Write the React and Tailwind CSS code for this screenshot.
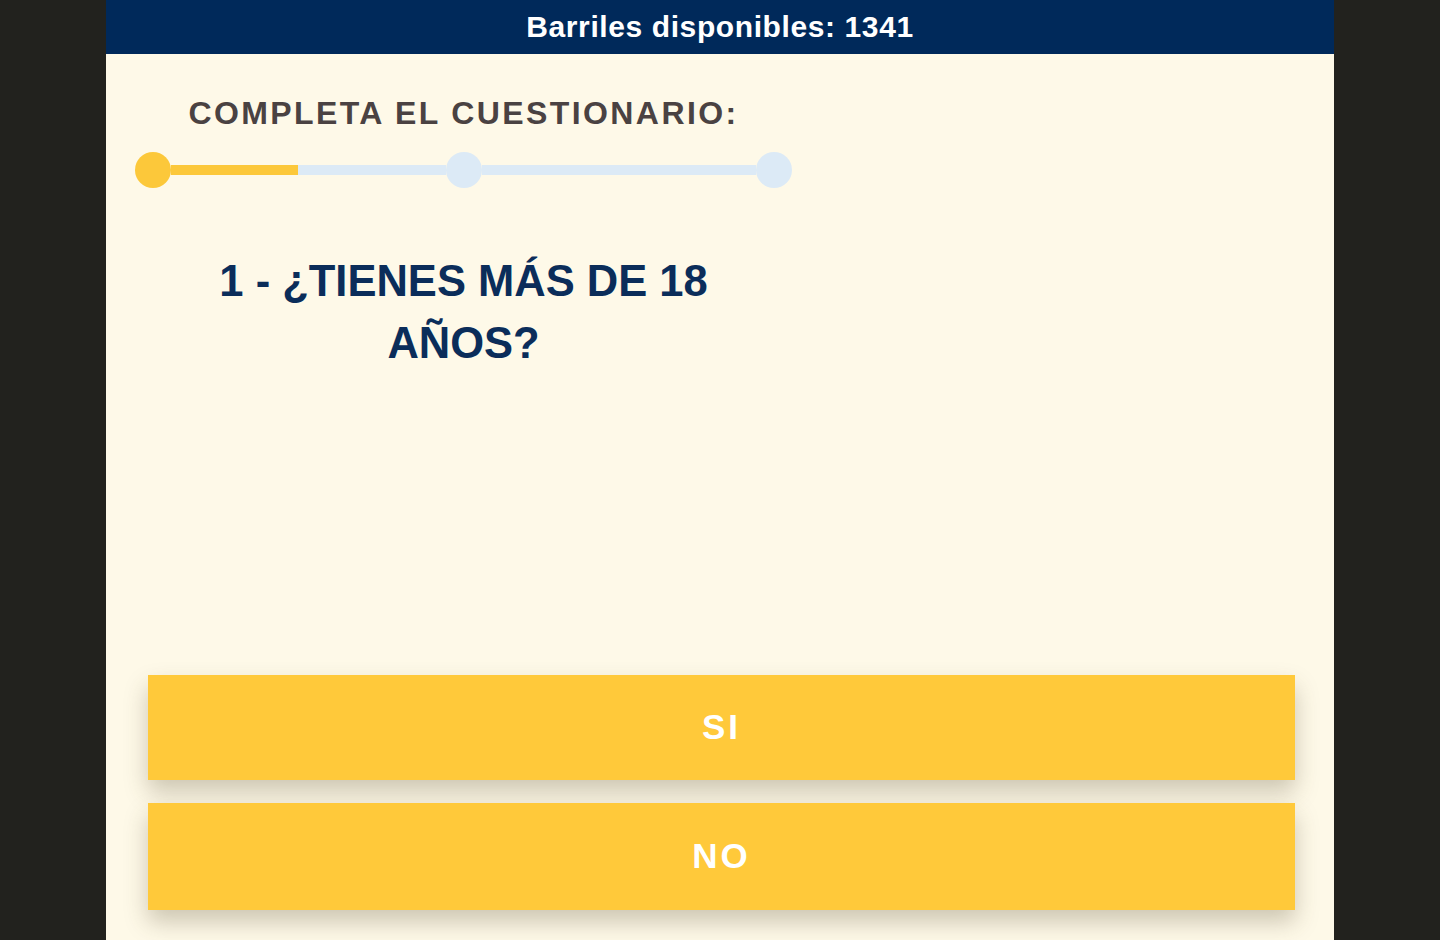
export default function App() {
  return (
    <div className="w-full h-[940px] bg-[#22221e] flex justify-center overflow-hidden font-['Liberation_Sans',Arial,sans-serif]">
      <div className="w-[1228px] h-full bg-[#fef9e8] flex flex-col">

        {/* Header */}
        <div className="h-[54px] bg-[#00295a] flex items-center justify-center">
          <p className="text-white font-bold text-[30px] leading-[36px] tracking-[0.6px]">Barriles disponibles: 1341</p>
        </div>

        {/* Quiz area */}
        <div className="w-[657px] ml-[29px] flex flex-col items-center">
          <h2 className="mt-[41px] text-[32px] leading-[36px] font-bold text-[#4a4242] tracking-[2.4px]">COMPLETA EL CUESTIONARIO:</h2>

          <div className="mt-[21px] w-full flex items-center">
            <div className="w-9 h-9 rounded-full bg-[#fcc83a] shrink-0" />
            <div className="flex-1 h-[10px] flex">
              <div className="w-[127px] bg-[#fcc83a]" />
              <div className="flex-1 bg-[#dceaf6]" />
            </div>
            <div className="w-9 h-9 rounded-full bg-[#dceaf6] shrink-0" />
            <div className="flex-1 h-[10px] bg-[#dceaf6]" />
            <div className="w-9 h-9 rounded-full bg-[#dceaf6] shrink-0" />
          </div>

          <h1 className="mt-[62px] w-[540px] text-center text-[43.5px] leading-[62px] font-bold text-[#0b2d5a]">
            1 - ¿TIENES MÁS DE 18 AÑOS?
          </h1>
        </div>

        {/* Answers */}
        <div className="mt-auto mb-[30px] pl-[42px] pr-[39px] flex flex-col gap-[23px]">
          <button className="h-[105px] w-full bg-[#ffc93a] text-white font-bold text-[35px] tracking-[3px] shadow-[0_12px_22px_rgba(80,70,40,0.28)]">
            SI
          </button>
          <button className="h-[107px] w-full bg-[#ffc93a] text-white font-bold text-[35px] tracking-[3px] shadow-[0_12px_22px_rgba(80,70,40,0.28)]">
            NO
          </button>
        </div>

      </div>
    </div>
  );
}
